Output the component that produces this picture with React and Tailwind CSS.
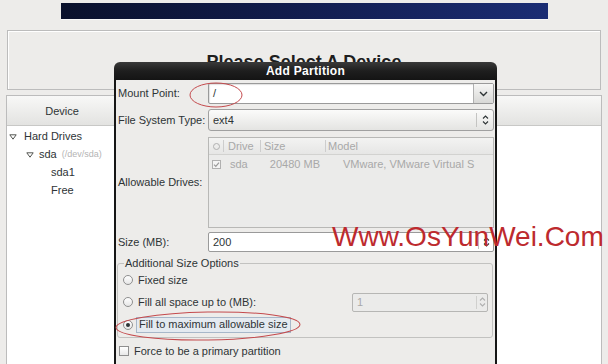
import React from "react";

function ChevronDown() {
  return (
    <svg width="9" height="6" viewBox="0 0 9 6">
      <path d="M1 1l3.5 3.5L8 1" stroke="#2e3436" strokeWidth="1.4" fill="none" />
    </svg>
  );
}

function UpDown({ color = "#2e3436" }) {
  return (
    <svg width="7" height="12" viewBox="0 0 7 12">
      <path d="M1 4.5L3.5 2L6 4.5M1 7.5L3.5 10L6 7.5" stroke={color} strokeWidth="1.1" fill="none" />
    </svg>
  );
}

function Tri() {
  return (
    <svg width="8" height="6" viewBox="0 0 8 6">
      <path d="M0.8 0.8h6.4L4 5.2z" stroke="#555753" strokeWidth="1" fill="none" strokeLinejoin="round" />
    </svg>
  );
}

function Radio({ checked }) {
  return (
    <div className="w-[10px] h-[10px] rounded-full border border-[#8f8f8f] bg-gradient-to-b from-white to-[#e6e6e6] flex items-center justify-center">
      {checked && <div className="w-[4px] h-[4px] rounded-full bg-[#2e3436]" />}
    </div>
  );
}

export default function App() {
  return (
    <div className="relative w-[608px] h-[364px] overflow-hidden bg-[#edecea] font-['Liberation_Sans',Arial,sans-serif] text-[11px] leading-none text-[#2e3436]">
      {/* banner */}
      <div className="ml-[61px] mt-[3px] w-[487px] h-[17px] bg-gradient-to-r from-[#0a112c] via-[#121d4f] to-[#1b2d74] border-b border-[#f8f8f8]" />

      {/* top box */}
      <div className="mx-[7px] mt-[10px] h-[60px] border border-[#bcbcbc] shadow-[inset_1px_1px_0_#ffffff] flex justify-center pt-[22px]">
        <span className="text-[18px] font-bold leading-none text-[#1e1e1e]">Please Select A Device</span>
      </div>

      {/* device panel */}
      <div className="mx-[6px] mt-[5px] h-[300px] border border-[#bcbcbc] bg-white flex flex-col">
        <div className="h-[30px] flex bg-gradient-to-b from-[#f8f8f7] to-[#e3e3e1] border-b border-[#c8c8c6]">
          <div className="w-[111px] border-r border-[#cfcfcd] flex items-center justify-center pt-[2px]">Device</div>
        </div>
        <div className="flex flex-col pt-[1px]">
          <div className="h-[18px] flex items-center pl-[2px] gap-[7px] pt-[1px]">
            <Tri />
            <span>Hard Drives</span>
          </div>
          <div className="h-[18px] flex items-center pl-[19px] gap-[5px] pt-[1px]">
            <Tri />
            <span>sda</span>
            <span className="text-[9px] text-[#b4b4b4]">(/dev/sda)</span>
          </div>
          <div className="h-[18px] flex items-center pl-[44px] pt-[1px]">sda1</div>
          <div className="h-[18px] flex items-center pl-[44px] pt-[1px]">Free</div>
        </div>
      </div>

      {/* dialog */}
      <div className="absolute left-[114px] top-[62px] w-[383px] h-[310px] flex flex-col">
        <div className="h-[18px] rounded-t-[6px] bg-gradient-to-b from-[#3a3a3a] via-[#1e1e1e] to-[#141414] flex items-center justify-center">
          <span className="text-white font-bold text-[12px] tracking-[0.3px]">Add Partition</span>
        </div>
        <div className="flex-1 border-x-[2px] border-[#161616] bg-[#edecea] flex flex-col pr-[1px]">
          {/* mount point */}
          <div className="mt-[3px] h-[21px] flex items-center">
            <div className="w-[92px] pl-[2px]">Mount Point:</div>
            <div className="flex-1 h-full flex border border-[#9a9a9a] rounded-[2px] bg-white overflow-hidden">
              <div className="flex-1 flex items-center pl-[4px] shadow-[inset_1px_1px_1px_rgba(0,0,0,0.12)]">/</div>
              <div className="w-[20px] border-l border-[#b0b0b0] bg-gradient-to-b from-[#f6f6f5] to-[#d8d8d6] flex items-center justify-center">
                <ChevronDown />
              </div>
            </div>
          </div>

          {/* fs type */}
          <div className="mt-[5px] h-[22px] flex items-center">
            <div className="w-[92px] pl-[2px]">File System Type:</div>
            <div className="flex-1 h-full flex border border-[#a0a0a0] rounded-[3px] bg-gradient-to-b from-[#fbfbfa] to-[#e4e4e2]">
              <div className="flex-1 flex items-center pl-[4px]">ext4</div>
              <div className="my-[3px] w-[17px] border-l border-[#c4c4c2] flex items-center justify-center">
                <UpDown />
              </div>
            </div>
          </div>

          {/* allowable drives */}
          <div className="mt-[6px] h-[91px] flex items-center">
            <div className="w-[92px] pl-[2px]">Allowable Drives:</div>
            <div className="flex-1 h-full border border-[#b8b8b6] bg-[#ebebea] flex flex-col text-[#a8a8a8]">
              <div className="h-[17px] flex items-center bg-gradient-to-b from-[#f3f3f2] to-[#e6e6e5] border-b border-[#d2d2d0]">
                <div className="w-[14px] flex justify-center">
                  <div className="w-[7px] h-[7px] rounded-full border border-[#b0b0b0]" />
                </div>
                <div className="w-[37px] h-[12px] border-l border-[#cdcdcd] pl-[4px] flex items-center">Drive</div>
                <div className="w-[65px] h-[12px] border-l border-[#cdcdcd] pl-[3px] flex items-center">Size</div>
                <div className="flex-1 h-[12px] border-l border-[#cdcdcd] pl-[2px] flex items-center">Model</div>
              </div>
              <div className="h-[19px] flex items-center">
                <div className="w-[14px] flex justify-center pl-[1px]">
                  <svg width="9" height="9" viewBox="0 0 9 9">
                    <rect x="0.5" y="0.5" width="8" height="8" fill="#f4f4f4" stroke="#b0b0b0" />
                    <path d="M2 4.6l1.8 1.8L7 2.6" stroke="#9a9a9a" strokeWidth="1.2" fill="none" />
                  </svg>
                </div>
                <div className="w-[37px] pl-[7px]">sda</div>
                <div className="w-[65px] text-right pr-[5px]">20480 MB</div>
                <div className="flex-1 pl-[18px] whitespace-nowrap overflow-hidden">VMware, VMware Virtual S</div>
              </div>
            </div>
          </div>

          {/* size */}
          <div className="mt-[4px] h-[20px] flex items-center">
            <div className="w-[92px] pl-[2px]">Size (MB):</div>
            <div className="flex-1 h-full flex border border-[#9a9a9a] rounded-[2px] bg-white">
              <div className="flex-1 flex items-center pl-[4px]">200</div>
              <div className="my-[2px] w-[15px] border-l border-[#c4c4c2] flex items-center justify-center">
                <UpDown />
              </div>
            </div>
          </div>

          {/* additional size options */}
          <fieldset className="mt-[5px] ml-[1px] mr-[1px] border border-[#c2c2c0] rounded-[3px] pl-[5px] pr-[4px] pb-[1px]">
            <legend className="ml-[1px] px-[1px] h-[12px] leading-[12px]">Additional Size Options</legend>
            <div className="h-[22px] flex items-center gap-[5px]">
              <Radio />
              <span>Fixed size</span>
            </div>
            <div className="h-[22px] flex items-center gap-[5px]">
              <Radio />
              <span>Fill all space up to (MB):</span>
              <div className="ml-auto w-[136px] h-[19px] flex border border-[#b6b6b4] rounded-[2px] bg-[#ebebea] text-[#a8a8a8]">
                <div className="flex-1 flex items-center pl-[4px]">1</div>
                <div className="my-[2px] w-[11px] border-l border-[#d0d0ce] flex items-center justify-center">
                  <UpDown color="#b0b0b0" />
                </div>
              </div>
            </div>
            <div className="h-[23px] flex items-center gap-[3px]">
              <Radio checked />
              <span className="h-[16px] flex items-center px-[2px] border border-[#a7b7c9] bg-[#e4eaf0]">Fill to maximum allowable size</span>
            </div>
          </fieldset>

          {/* force primary */}
          <div className="mt-[4px] h-[18px] flex items-center gap-[5px] pl-[3px]">
            <div className="w-[10px] h-[10px] border border-[#8f8f8f] bg-gradient-to-b from-white to-[#e8e8e8]" />
            <span>Force to be a primary partition</span>
          </div>
        </div>
      </div>

      {/* annotations */}
      <svg className="absolute left-0 top-0 pointer-events-none" width="608" height="364" viewBox="0 0 608 364">
        <ellipse cx="216" cy="95" rx="26" ry="12" fill="none" stroke="#c44a4d" strokeWidth="1" />
        <ellipse cx="208" cy="326" rx="92" ry="14" fill="none" stroke="#c44a4d" strokeWidth="1" transform="rotate(-1 208 326)" />
      </svg>

      {/* watermark */}
      <div className="absolute left-[332px] top-[223px] text-[28px] leading-none text-[#bd2a2e] whitespace-nowrap font-['Liberation_Sans',Arial,sans-serif]">
        Www.OsYunWei.Com
      </div>
    </div>
  );
}
